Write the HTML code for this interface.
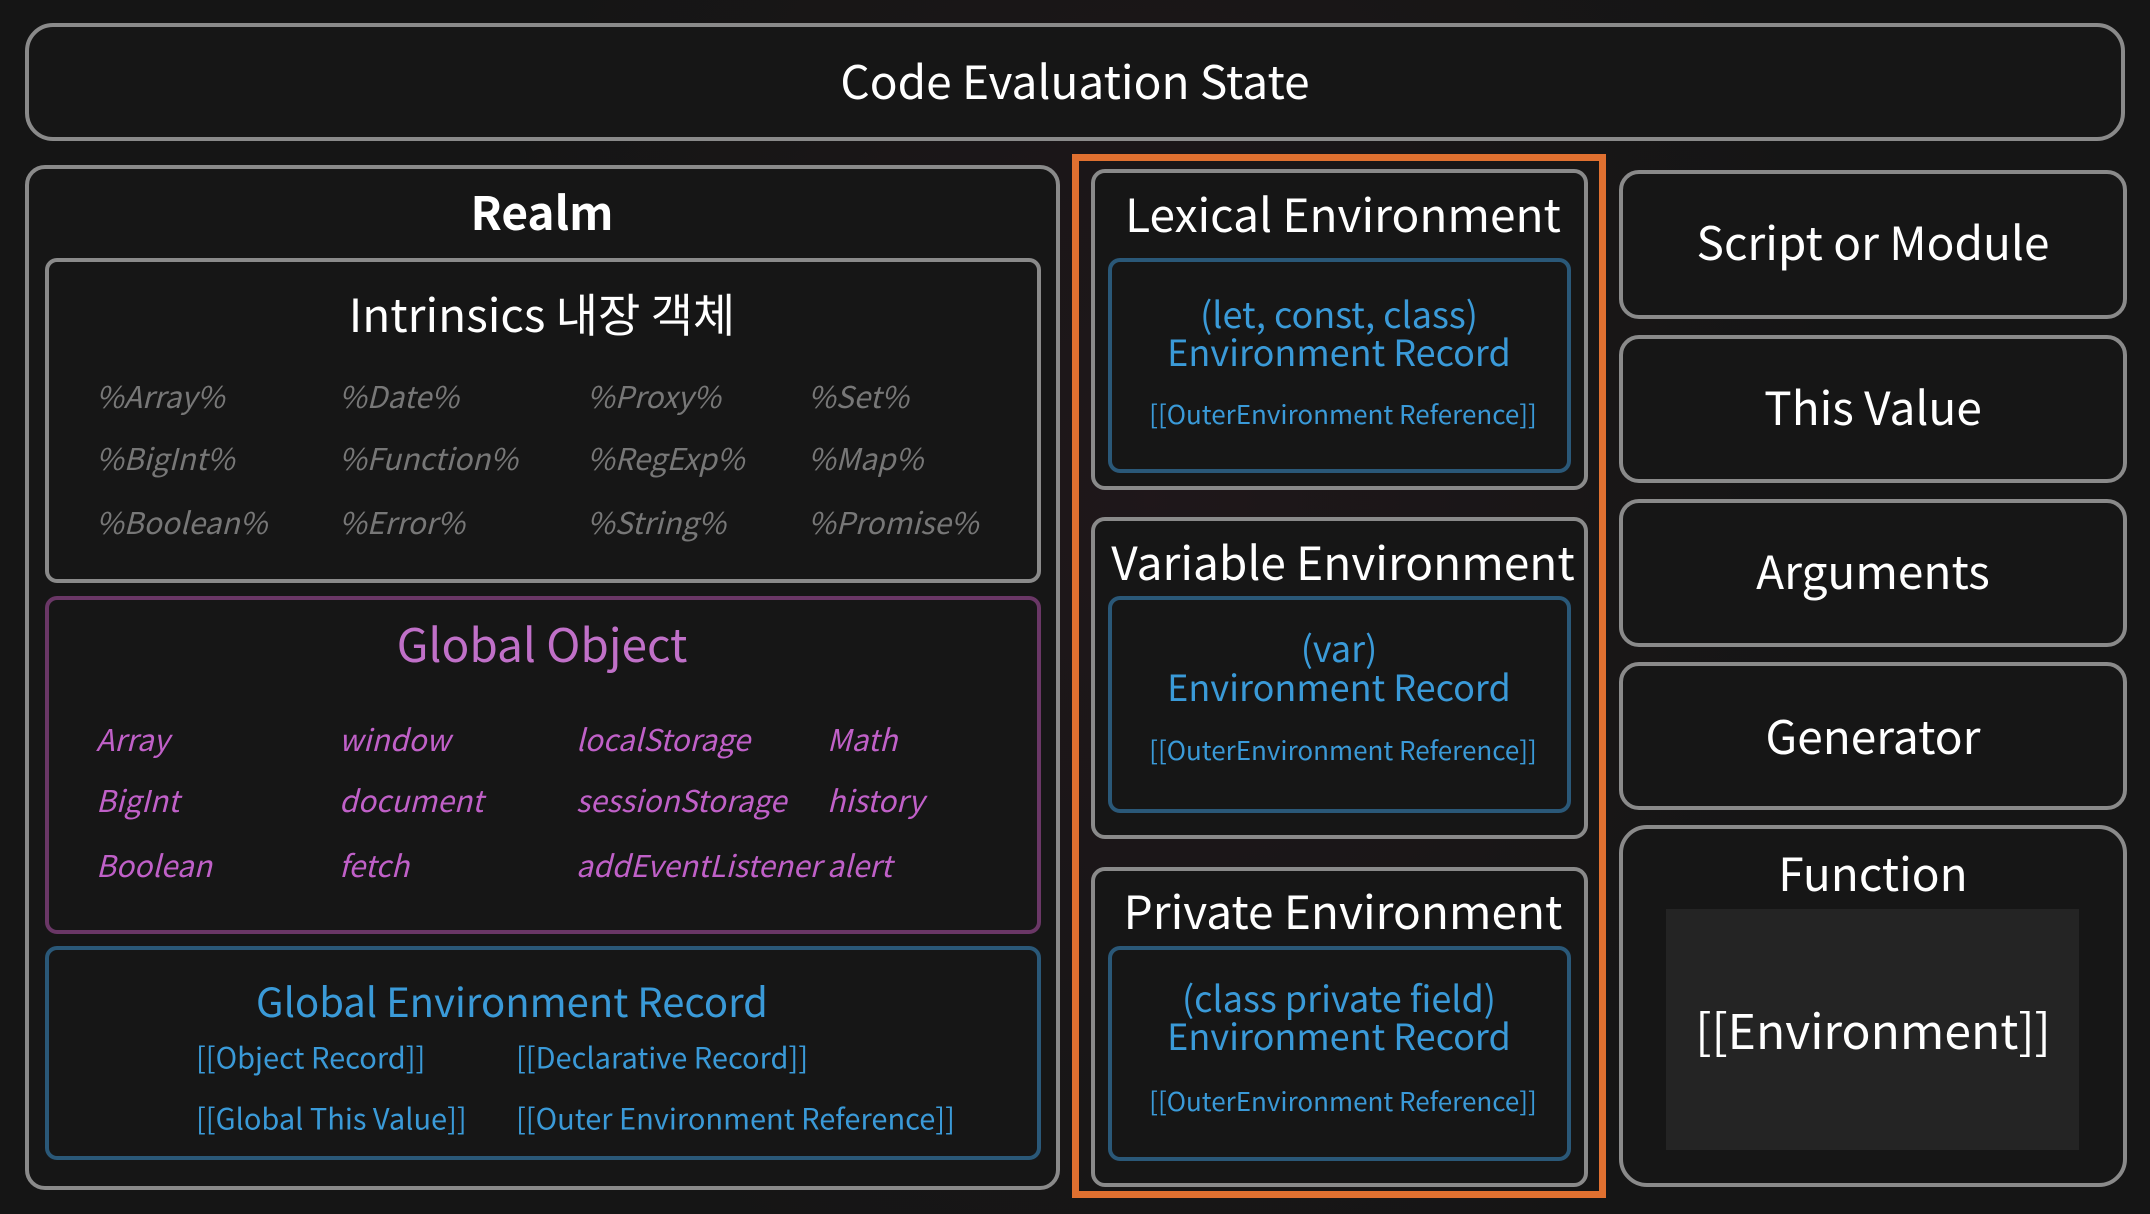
<!DOCTYPE html>
<html><head><meta charset="utf-8"><style>
*{margin:0;padding:0;box-sizing:border-box}
body{width:2150px;height:1214px;background:#151515;overflow:hidden;position:relative;font-family:"Noto Sans CJK KR","Liberation Sans",sans-serif;color:#fff}
.b{position:absolute;border:4px solid #8a8a8a;border-radius:20px;background:#161616}
.t{position:absolute;white-space:nowrap;transform:translate(-50%,-50%);line-height:1}
.l{position:absolute;white-space:nowrap;transform:translateY(-50%);line-height:1;font-style:italic}
.blue{border-color:#2a5878;border-radius:12px}
.bt{color:#3a9ad8}
</style></head><body>
<div style="position:absolute;inset:0;background:radial-gradient(ellipse 700px 900px at 1150px 500px,rgba(60,30,40,.25),transparent)"></div>
<div class="b" style="left:25px;top:23px;width:2100px;height:118px;border-radius:28px"></div>
<div class="t" style="left:1075px;top:80px;font-size:46px">Code Evaluation State</div>

<div class="b" style="left:25px;top:165px;width:1035px;height:1025px"></div>
<div class="t" style="left:542px;top:211px;font-size:46px;font-weight:bold">Realm</div>

<div class="b" style="left:45px;top:258px;width:996px;height:325px;border-radius:12px"></div>
<div class="t" style="left:542px;top:313px;font-size:46px">Intrinsics 내장 객체</div>
<div style="color:#777;font-size:30px">
<div class="l" style="left:96px;top:395px">%Array%</div><div class="l" style="left:339px;top:395px">%Date%</div><div class="l" style="left:587px;top:395px">%Proxy%</div><div class="l" style="left:808px;top:395px">%Set%</div>
<div class="l" style="left:96px;top:457px">%BigInt%</div><div class="l" style="left:339px;top:457px">%Function%</div><div class="l" style="left:587px;top:457px">%RegExp%</div><div class="l" style="left:808px;top:457px">%Map%</div>
<div class="l" style="left:96px;top:521px">%Boolean%</div><div class="l" style="left:339px;top:521px">%Error%</div><div class="l" style="left:587px;top:521px">%String%</div><div class="l" style="left:808px;top:521px">%Promise%</div>
</div>

<div class="b" style="left:45px;top:596px;width:996px;height:338px;border-color:#6a3766;border-radius:12px"></div>
<div class="t" style="left:542px;top:643px;font-size:46px;color:#c070c8">Global Object</div>
<div style="color:#c060c8;font-size:30px">
<div class="l" style="left:96px;top:738px">Array</div><div class="l" style="left:339px;top:738px">window</div><div class="l" style="left:576px;top:738px">localStorage</div><div class="l" style="left:827px;top:738px">Math</div>
<div class="l" style="left:96px;top:799px">BigInt</div><div class="l" style="left:339px;top:799px">document</div><div class="l" style="left:576px;top:799px">sessionStorage</div><div class="l" style="left:827px;top:799px">history</div>
<div class="l" style="left:96px;top:864px">Boolean</div><div class="l" style="left:339px;top:864px">fetch</div><div class="l" style="left:576px;top:864px">addEventListener</div><div class="l" style="left:827px;top:864px">alert</div>
</div>

<div class="b blue" style="left:45px;top:946px;width:996px;height:214px"></div>
<div class="t bt" style="left:512px;top:1000px;font-size:40px">Global Environment Record</div>
<div class="bt" style="font-size:29px">
<div class="l" style="font-style:normal;left:196px;top:1057px">[[Object Record]]</div><div class="l" style="font-style:normal;left:516px;top:1057px">[[Declarative Record]]</div>
<div class="l" style="font-style:normal;left:196px;top:1118px">[[Global This Value]]</div><div class="l" style="font-style:normal;left:516px;top:1118px">[[Outer Environment Reference]]</div>
</div>

<div style="position:absolute;left:1072px;top:154px;width:534px;height:1044px;border:7px solid #e07030"></div>

<div class="b" style="left:1091px;top:169px;width:497px;height:321px;border-radius:14px"></div>
<div class="t" style="left:1343px;top:213px;font-size:46px">Lexical Environment</div>
<div class="b blue" style="left:1108px;top:258px;width:463px;height:215px"></div>
<div class="t bt" style="left:1339px;top:313px;font-size:36px">(let, const, class)</div>
<div class="t bt" style="left:1339px;top:351px;font-size:36px">Environment Record</div>
<div class="t bt" style="left:1343px;top:414px;font-size:26px">[[OuterEnvironment Reference]]</div>

<div class="b" style="left:1091px;top:517px;width:497px;height:322px;border-radius:14px"></div>
<div class="t" style="left:1343px;top:561px;font-size:46px">Variable Environment</div>
<div class="b blue" style="left:1108px;top:596px;width:463px;height:217px"></div>
<div class="t bt" style="left:1339px;top:647px;font-size:36px">(var)</div>
<div class="t bt" style="left:1339px;top:686px;font-size:36px">Environment Record</div>
<div class="t bt" style="left:1343px;top:750px;font-size:26px">[[OuterEnvironment Reference]]</div>

<div class="b" style="left:1091px;top:867px;width:497px;height:320px;border-radius:14px"></div>
<div class="t" style="left:1343px;top:910px;font-size:46px">Private Environment</div>
<div class="b blue" style="left:1108px;top:946px;width:463px;height:215px"></div>
<div class="t bt" style="left:1339px;top:997px;font-size:36px">(class private field)</div>
<div class="t bt" style="left:1339px;top:1035px;font-size:36px">Environment Record</div>
<div class="t bt" style="left:1343px;top:1101px;font-size:26px">[[OuterEnvironment Reference]]</div>

<div class="b" style="left:1619px;top:170px;width:508px;height:149px"></div>
<div class="t" style="left:1873px;top:241px;font-size:46px">Script or Module</div>
<div class="b" style="left:1619px;top:335px;width:508px;height:148px"></div>
<div class="t" style="left:1873px;top:406px;font-size:46px">This Value</div>
<div class="b" style="left:1619px;top:499px;width:508px;height:148px"></div>
<div class="t" style="left:1873px;top:570px;font-size:46px">Arguments</div>
<div class="b" style="left:1619px;top:662px;width:508px;height:148px"></div>
<div class="t" style="left:1873px;top:735px;font-size:46px">Generator</div>
<div class="b" style="left:1619px;top:825px;width:508px;height:362px;border-radius:28px"></div>
<div class="t" style="left:1873px;top:872px;font-size:46px">Function</div>
<div style="position:absolute;left:1666px;top:909px;width:413px;height:241px;background:#242424"></div>
<div class="t" style="left:1873px;top:1028px;font-size:48px">[[Environment]]</div>
</body></html>
